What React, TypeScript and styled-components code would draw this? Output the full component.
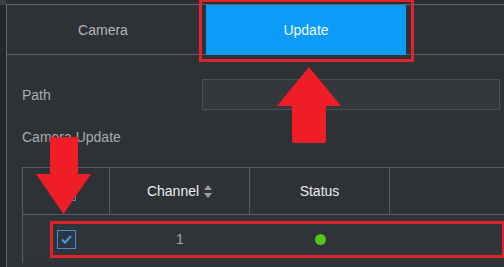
import styled, { createGlobalStyle } from "styled-components";

const GlobalStyle = createGlobalStyle`
  html, body {
    margin: 0;
    padding: 0;
    background: #2a2d31;
  }
  * {
    box-sizing: border-box;
  }
`;

function SortIcon() {
  return (
    <svg width="8" height="13" viewBox="0 0 8 13">
      <path d="M4 0 L8 5 L0 5 Z" fill="#9b9ea3" />
      <path d="M0 8 L8 8 L4 13 Z" fill="#9b9ea3" />
    </svg>
  );
}

function Check() {
  return (
    <svg width="11" height="9" viewBox="0 0 11 9">
      <path d="M1 4.5 L4 7.5 L10 1" fill="none" stroke="#3d9fec" strokeWidth="2" />
    </svg>
  );
}

function App() {
  return (
    <>
      <GlobalStyle />
      <S.Root>
        <S.Rail />
        <S.Panel>
          <S.TabBar>
            <S.Tab>Camera</S.Tab>
            <S.Tab active>Update</S.Tab>
          </S.TabBar>

          <S.Content>
            <S.FormRow>
              <S.Label>Path</S.Label>
              <S.Input />
            </S.FormRow>
            <S.SectionLabel>Camera Update</S.SectionLabel>

            <S.Table>
              <S.HeaderRow>
                <S.Cell>
                  <S.CheckBox>
                    <Check />
                  </S.CheckBox>
                </S.Cell>
                <S.Cell>
                  Channel <SortIcon />
                </S.Cell>
                <S.Cell>Status</S.Cell>
                <S.Cell />
              </S.HeaderRow>
              <S.BodyRow>
                <S.Cell>
                  <S.CheckBox>
                    <Check />
                  </S.CheckBox>
                </S.Cell>
                <S.Cell muted>1</S.Cell>
                <S.Cell>
                  <S.Dot />
                </S.Cell>
                <S.Cell />
                <S.RowMark />
              </S.BodyRow>
            </S.Table>
          </S.Content>
        </S.Panel>

        <S.Arrow style={{ left: 277, top: 67 }} width="64" height="77" viewBox="0 0 64 77">
          <path d="M32 0 L64 39 L49 39 L49 74 Q49 76 47 76 L17 76 Q15 76 15 74 L15 39 L0 39 Z" />
        </S.Arrow>
        <S.Arrow style={{ left: 36, top: 137 }} width="55" height="77" viewBox="0 0 55 77">
          <path d="M14 0 L42 0 L42 37 L55 37 L27.5 77 L0 37 L14 37 Z" />
        </S.Arrow>
      </S.Root>
    </>
  );
}

export default App;

const S = {
  Root: styled.div`
    position: relative;
    display: flex;
    width: 504px;
    height: 267px;
    overflow: hidden;
    background: #2a2d31;
    font-family: "Liberation Sans", Arial, sans-serif;
    font-size: 14px;
  `,

  Rail: styled.div`
    width: 6px;
    flex-shrink: 0;
    background: linear-gradient(#3c3f43 0 5px, #25282b 5px);
  `,

  Panel: styled.div`
    flex: 1;
    margin-top: 4px;
    border-top: 1px solid #62656a;
    border-left: 1px solid #62656a;
    background: #2e3136;
  `,

  TabBar: styled.div`
    display: flex;
    height: 50px;
    border-bottom: 1px solid #5f6266;
  `,

  Tab: styled.div<{ active?: boolean }>`
    position: relative;
    display: flex;
    align-items: center;
    justify-content: center;
    width: ${({ active }) => (active ? "200px" : "192px")};
    margin-left: ${({ active }) => (active ? "7px" : "0")};
    margin-bottom: ${({ active }) => (active ? "-1px" : "0")};
    background: ${({ active }) => (active ? "#0a9cf6" : "transparent")};
    color: ${({ active }) => (active ? "#f4f8ff" : "#b3b6ba")};

    &::after {
      content: "";
      display: ${({ active }) => (active ? "block" : "none")};
      position: absolute;
      left: -7px;
      right: -8px;
      top: -6px;
      bottom: -7px;
      border: 3px solid #e0242c;
    }
  `,

  Content: styled.div`
    padding-left: 15px;
  `,

  FormRow: styled.div`
    display: flex;
    align-items: center;
    height: 31px;
    margin-top: 24px;
  `,

  Label: styled.div`
    width: 180px;
    color: #a9acb1;
  `,

  Input: styled.div`
    width: 298px;
    height: 31px;
    background: #34373b;
    border: 1px solid #4c4f54;
  `,

  SectionLabel: styled.div`
    height: 20px;
    margin-top: 17px;
    line-height: 20px;
    color: #a9acb1;
  `,

  Table: styled.div`
    width: 620px;
    margin-top: 20px;
    border-left: 1px solid #5a5d62;
  `,

  HeaderRow: styled.div`
    display: grid;
    grid-template-columns: 87px 140px 140px 1fr;
    height: 48px;
    border-top: 1px solid #5a5d62;
    border-bottom: 1px solid #5a5d62;
    color: #eceef0;

    & > div {
      border-right: 1px solid #5a5d62;
    }
  `,

  BodyRow: styled.div`
    position: relative;
    display: grid;
    grid-template-columns: 87px 140px 140px 1fr;
    height: 48px;
    background: #303338;
  `,

  Cell: styled.div<{ muted?: boolean }>`
    display: flex;
    align-items: center;
    justify-content: center;
    gap: 5px;
    color: ${({ muted }) => (muted ? "#a3a6ab" : "inherit")};
  `,

  CheckBox: styled.div`
    display: flex;
    align-items: center;
    justify-content: center;
    width: 19px;
    height: 19px;
    border: 1px solid #3b8fd6;
    background: #2c3540;
  `,

  Dot: styled.div`
    width: 11px;
    height: 11px;
    border-radius: 50%;
    background: #52c41a;
  `,

  RowMark: styled.div`
    position: absolute;
    left: 27px;
    top: 6px;
    width: 455px;
    height: 37px;
    border: 3px solid #e0242c;
  `,

  Arrow: styled.svg`
    position: absolute;
    fill: #ee1d26;
  `,
};
